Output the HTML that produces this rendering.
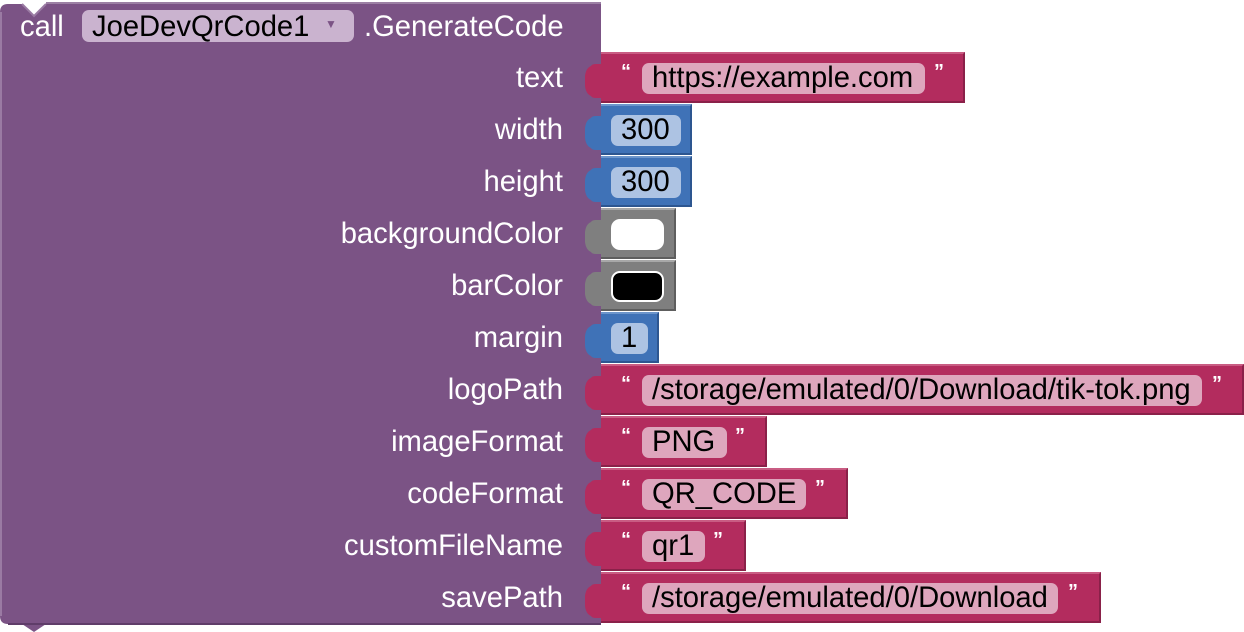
<!DOCTYPE html>
<html><head><meta charset="utf-8"><style>
body{margin:0;width:1244px;height:632px;background:#fff;position:relative;overflow:hidden;font-family:"Liberation Sans",Arial,sans-serif;}
.a{position:absolute;}
.lbl{position:absolute;right:681px;color:#fff;font-size:29.2px;line-height:52px;height:52px;white-space:nowrap;}
.blk{position:absolute;left:601px;height:47px;box-sizing:border-box;}
.s{background:#b32c5e;border-top:2px solid #c95c83;border-bottom:2px solid #8a2149;border-right:2px solid #8a2149;}
.n{background:#3f72b7;border-top:2px solid #6c95cb;border-bottom:2px solid #2d5690;border-right:2px solid #2d5690;}
.g{background:#7f7f7f;border-top:2px solid #a8a8a8;border-bottom:2px solid #5e5e5e;border-right:2px solid #5e5e5e;}
.fld{position:absolute;top:9px;height:31px;border-radius:7px;font-size:29.2px;line-height:31px;color:#000;box-sizing:border-box;padding-left:10px;white-space:nowrap;}
.sf{background:#dea6bd;}
.nf{background:#adc3e3;}
.q{position:absolute;top:7px;color:#fff;font-size:20px;font-weight:bold;}
</style></head><body>
<svg class="a" style="left:0;top:0" width="1244" height="632">
<path d="M8 4 H22 L34 16 L46 4 H601 V624 H46 L34 632 L22 624 H8 Q0 624 0 616 V12 Q0 4 8 4Z" fill="#7b5385"/>
<path d="M22 4 L34 16 L46 4" fill="#fff" stroke="#9a7aa3" stroke-width="2"/>
<path d="M1 12 V616" stroke="#9a7aa3" stroke-width="2"/>
<path d="M46 3 H601" stroke="#9c80a4" stroke-width="2"/>
<path d="M8 624 H601" stroke="#5f3d69" stroke-width="2"/>
</svg>
<div class="a" style="left:20px;top:11px;color:#fff;font-size:29.2px">call</div>
<div class="a" style="left:82px;top:10px;width:272px;height:32px;background:#cab3cf;border-radius:7px;"></div>
<div class="a" style="left:92px;top:11px;font-size:29.2px;color:#000">JoeDevQrCode1</div>
<div class="a" style="left:325px;top:17px;font-size:12px;color:#7b5385">▼</div>
<div class="a" style="left:364px;top:11px;color:#fff;font-size:29.2px">.GenerateCode</div>

<div class="lbl" style="top:52px">text</div>
<div class="lbl" style="top:104px">width</div>
<div class="lbl" style="top:156px">height</div>
<div class="lbl" style="top:208px">backgroundColor</div>
<div class="lbl" style="top:260px">barColor</div>
<div class="lbl" style="top:312px">margin</div>
<div class="lbl" style="top:364px">logoPath</div>
<div class="lbl" style="top:416px">imageFormat</div>
<div class="lbl" style="top:468px">codeFormat</div>
<div class="lbl" style="top:520px">customFileName</div>
<div class="lbl" style="top:572px">savePath</div>

<div class="blk s" style="top:52px;width:364px;height:51px"><span class="q" style="left:20px">“</span><div class="fld sf" style="left:41px;width:283px">https://example.com</div><span class="q" style="left:333px">”</span></div>
<div class="blk n" style="top:104px;width:91px;height:51px"><div class="fld nf" style="left:10px;width:70px">300</div></div>
<div class="blk n" style="top:156px;width:91px;height:51px"><div class="fld nf" style="left:10px;width:70px">300</div></div>
<div class="blk g" style="top:208px;width:75px;height:51px"><div class="fld" style="left:10px;width:53px;background:#fff;border-radius:9px"></div></div>
<div class="blk g" style="top:260px;width:75px;height:51px"><div class="fld" style="left:10px;width:53px;background:#000;border:2px solid #fff;border-radius:9px"></div></div>
<div class="blk n" style="top:312px;width:58px;height:51px"><div class="fld nf" style="left:10px;width:37px">1</div></div>
<div class="blk s" style="top:364px;width:643px;height:51px"><span class="q" style="left:20px">“</span><div class="fld sf" style="left:41px;width:560px">/storage/emulated/0/Download/tik-tok.png</div><span class="q" style="left:611px">”</span></div>
<div class="blk s" style="top:416px;width:166px;height:51px"><span class="q" style="left:20px">“</span><div class="fld sf" style="left:41px;width:85px">PNG</div><span class="q" style="left:134px">”</span></div>
<div class="blk s" style="top:468px;width:247px;height:51px"><span class="q" style="left:20px">“</span><div class="fld sf" style="left:41px;width:164px">QR_CODE</div><span class="q" style="left:214px">”</span></div>
<div class="blk s" style="top:520px;width:145px;height:51px"><span class="q" style="left:20px">“</span><div class="fld sf" style="left:41px;width:63px">qr1</div><span class="q" style="left:112px">”</span></div>
<div class="blk s" style="top:572px;width:500px;height:51px"><span class="q" style="left:20px">“</span><div class="fld sf" style="left:41px;width:416px">/storage/emulated/0/Download</div><span class="q" style="left:467px">”</span></div>

<svg class="a" style="left:0;top:0" width="620" height="632">
<defs><path id="t" d="M603 12 H596 Q592 12 591 14 Q586 16 585 24 V34 Q586 42 591 44 Q592 46 596 46 H603Z"/></defs>
<use href="#t" y="52" fill="#b32c5e"/>
<use href="#t" y="104" fill="#3f72b7"/>
<use href="#t" y="156" fill="#3f72b7"/>
<use href="#t" y="208" fill="#7f7f7f"/>
<use href="#t" y="260" fill="#7f7f7f"/>
<use href="#t" y="312" fill="#3f72b7"/>
<use href="#t" y="364" fill="#b32c5e"/>
<use href="#t" y="416" fill="#b32c5e"/>
<use href="#t" y="468" fill="#b32c5e"/>
<use href="#t" y="520" fill="#b32c5e"/>
<use href="#t" y="572" fill="#b32c5e"/>
</svg>
</body></html>
